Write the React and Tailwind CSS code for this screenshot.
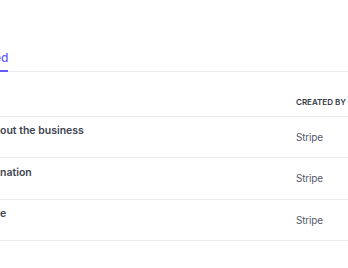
const ROWS = [
  { name: "out the business", by: "Stripe" },
  { name: "nation", by: "Stripe" },
  { name: "e", by: "Stripe" },
];

export default function App() {
  return (
    <div className="w-[348px] h-[268px] overflow-hidden bg-white font-['Inter',sans-serif]">
      <div className="pt-[50px]">
        {/* Tabs */}
        <div className="flex border-b border-[#ebeef1] text-[12px]">
          <div className="-ml-[6px] pb-[5px] border-b-2 border-[#635bff] -mb-px text-[#635bff] font-medium leading-[15px]">ed</div>
        </div>

        {/* Table header */}
        <div className="grid grid-cols-[296px_1fr] h-[45px] items-end border-b border-[#ebeef1] pb-[8px]">
          <div />
          <div className="text-[8px] font-semibold uppercase text-[#353a44] whitespace-nowrap">Created by</div>
        </div>

        {/* Rows */}
        {ROWS.map((row, i) => (
          <div key={row.name} className={`grid grid-cols-[296px_1fr] items-center border-b border-[#ebeef1] ${i === 1 ? "h-[42px]" : "h-[41px]"}`}>
            <div className="flex flex-col leading-[13px]">
              <span className="text-[10.5px] font-semibold text-[#414552]">{row.name}</span>
              <span className="h-[13px]" />
            </div>
            <div className="text-[10px] tracking-[-0.2px] text-[#545969]">{row.by}</div>
          </div>
        ))}
      </div>
    </div>
  );
}
